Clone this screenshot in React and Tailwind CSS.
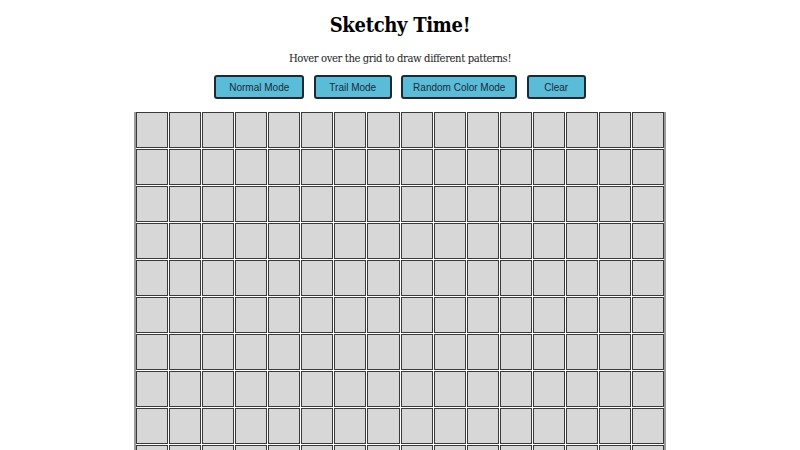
export default function App() {
  const cells = Array.from({ length: 16 * 16 });
  const buttons = [
    ["Normal Mode", "w-[90px]"],
    ["Trail Mode", "w-[78px]"],
    ["Random Color Mode", "w-[116px]"],
    ["Clear", "w-[59px]"],
  ];
  return (
    <div className="w-[800px] h-[450px] overflow-hidden bg-white flex flex-col items-center">
      <h1
        className="mt-[11px] text-[20px] leading-[28px] font-bold text-black tracking-[-0.3px]"
        style={{ fontFamily: '"DejaVu Serif Condensed", "DejaVu Serif", serif' }}
      >
        Sketchy Time!
      </h1>
      <p
        className="mt-[12px] text-[11.2px] leading-[16px] text-[#222] tracking-[-0.4px]"
        style={{ fontFamily: '"DejaVu Serif Condensed", "DejaVu Serif", serif' }}
      >
        Hover over the grid to draw different patterns!
      </p>
      <div className="mt-[8px] flex gap-[9.5px]">
        {buttons.map(([b, w]) => (
          <button
            key={b}
            className={`${w} h-[24px] bg-[#5bbcd8] border-2 border-[#1e2a33] rounded-[3px] text-[10px] text-[#1a2a3a]`}
            style={{ fontFamily: '"Liberation Sans", Arial, sans-serif' }}
          >
            {b}
          </button>
        ))}
      </div>
      <div className="mt-[13px] w-[532px] border-x-2 border-[#9a9a9a] bg-white grid grid-cols-16 gap-px">
        {cells.map((_, i) => (
          <div key={i} className="h-[36px] border border-[#3a3a3a] bg-[#d7d7d7]" />
        ))}
      </div>
    </div>
  );
}
